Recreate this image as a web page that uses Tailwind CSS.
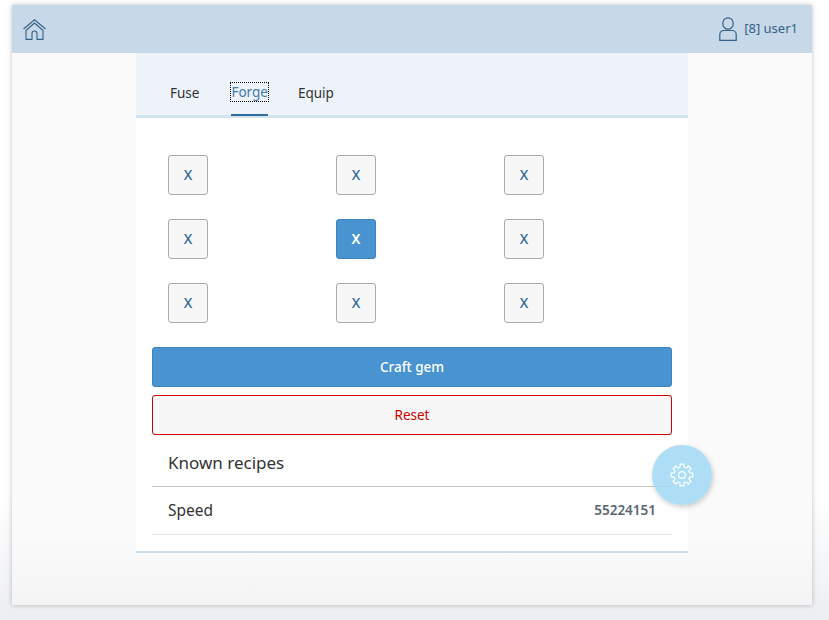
<!DOCTYPE html>
<html lang="en">
<head>
    <meta charset="UTF-8">
    <title>Forge</title>
    <script src="https://cdn.jsdelivr.net/npm/@tailwindcss/browser@4"></script>
</head>
<body class="h-[620px] w-[829px] overflow-hidden bg-gradient-to-b from-white from-80% to-[#eceef1] font-['Noto_Sans','Open_Sans',sans-serif]">
<div class="ml-3 mt-[5px] flex h-[600px] w-[800px] flex-col bg-gradient-to-b from-[#fafafa] from-90% to-[#f4f4f4] shadow-[0_0_5px_rgba(0,0,0,0.25)]">
    <!-- shell header -->
    <header class="flex h-12 shrink-0 items-center justify-between bg-[#c7d8e8] pl-[11px] pr-[14px] text-[#346187]">
        <svg class="h-[21px] w-[23px]" viewBox="0 0 23 21" fill="none" stroke="#346187" stroke-width="1.1">
            <path d="M.5 10 11.5 .8 22.5 10"/>
            <path d="M3 11.5V20.4H9V14.5a2.5 2.5 0 0 1 5 0V20.4H20V11.5L11.5 4Z" stroke-linejoin="round"/>
        </svg>
        <div class="flex items-center gap-[7px]">
            <svg class="h-6 w-[18px]" viewBox="0 0 18 24" fill="none" stroke="#346187" stroke-width="1.2">
                <ellipse cx="9" cy="6.5" rx="5.2" ry="5.7"/>
                <path d="M.8 23.4V17.5a4 4 0 0 1 4-4h8.4a4 4 0 0 1 4 4v5.9Z"/>
            </svg>
            <span class="text-[13px]">[8] user1</span>
        </div>
    </header>

    <main class="relative ml-[124px] flex h-[500px] w-[552px] flex-col border-b-2 border-[#c9deee] bg-white">
        <!-- tabs -->
        <nav class="flex h-[65px] shrink-0 items-end border-b-[3px] border-[#d3e3f0] bg-[#eef3fa] pl-[34px] text-[13.5px] text-[#333]">
            <span class="mr-8 pb-3">Fuse</span>
            <span class="relative mr-[30px] -mb-px border-b-2 border-[#2f6c9f] pb-3 text-[#3d7cab]"><span class="outline-1 outline-dotted outline-black">Forge</span></span>
            <span class="pb-3">Equip</span>
        </nav>

        <!-- gem grid -->
        <div class="grid grid-cols-[168px_168px_40px] grid-rows-[40px_40px_40px] gap-y-6 pl-8 pt-[37px]">
            <button class="h-10 w-10 rounded-[3px] border border-[#ababab] bg-[#f7f7f7] text-sm font-medium text-[#2f6a9c]">X</button>
            <button class="h-10 w-10 rounded-[3px] border border-[#ababab] bg-[#f7f7f7] text-sm font-medium text-[#2f6a9c]">X</button>
            <button class="h-10 w-10 rounded-[3px] border border-[#ababab] bg-[#f7f7f7] text-sm font-medium text-[#2f6a9c]">X</button>
            <button class="h-10 w-10 rounded-[3px] border border-[#ababab] bg-[#f7f7f7] text-sm font-medium text-[#2f6a9c]">X</button>
            <button class="h-10 w-10 rounded-[3px] border border-[#3f84bd] bg-[#4893d0] text-sm font-semibold text-white">X</button>
            <button class="h-10 w-10 rounded-[3px] border border-[#ababab] bg-[#f7f7f7] text-sm font-medium text-[#2f6a9c]">X</button>
            <button class="h-10 w-10 rounded-[3px] border border-[#ababab] bg-[#f7f7f7] text-sm font-medium text-[#2f6a9c]">X</button>
            <button class="h-10 w-10 rounded-[3px] border border-[#ababab] bg-[#f7f7f7] text-sm font-medium text-[#2f6a9c]">X</button>
            <button class="h-10 w-10 rounded-[3px] border border-[#ababab] bg-[#f7f7f7] text-sm font-medium text-[#2f6a9c]">X</button>
        </div>

        <!-- actions -->
        <div class="mt-6 flex flex-col gap-2 px-4">
            <button class="h-10 rounded-[3px] border border-[#3f84bd] bg-[#4893d0] text-[13.5px] font-medium text-white">Craft gem</button>
            <button class="h-10 rounded-[3px] border border-[#cc0000] bg-[#f7f7f7] text-[13.5px] text-[#cc0000]">Reset</button>
        </div>

        <!-- recipes -->
        <div class="mx-4 mt-1 flex h-12 items-center border-b border-[#c8c8c8] pl-4 text-[17px] text-[#333]">Known recipes</div>
        <div class="mx-4 flex h-12 items-center justify-between border-b border-[#e5e5e5] px-4">
            <span class="text-[15.5px] text-[#333]">Speed</span>
            <span class="text-[13.5px] font-semibold text-[#5a6670]">55224151</span>
        </div>

        <!-- floating settings button -->
        <button class="absolute left-[516px] top-[392px] flex h-[60px] w-[60px] items-center justify-center rounded-full bg-[#9fd8f3]/85 shadow-[1px_2px_5px_rgba(0,0,0,0.2)]">
            <svg class="h-6 w-6" viewBox="0 0 24 24" fill="none" stroke="white" stroke-width="1.2" stroke-linejoin="round">
                <circle cx="12" cy="12" r="3.4"/>
                <path d="M9.93 4.27 10.09 1.17H13.91L14.07 4.27 16 5.07 18.31 2.99 21.01 5.69 18.93 8 19.73 9.93 22.83 10.09V13.91L19.73 14.07 18.93 16 21.01 18.31 18.31 21.01 16 18.93 14.07 19.73 13.91 22.83H10.09L9.93 19.73 8 18.93 5.69 21.01 2.99 18.31 5.07 16 4.27 14.07 1.17 13.91V10.09L4.27 9.93 5.07 8 2.99 5.69 5.69 2.99 8 5.07Z"/>
            </svg>
        </button>
    </main>
</div>
</body>
</html>
